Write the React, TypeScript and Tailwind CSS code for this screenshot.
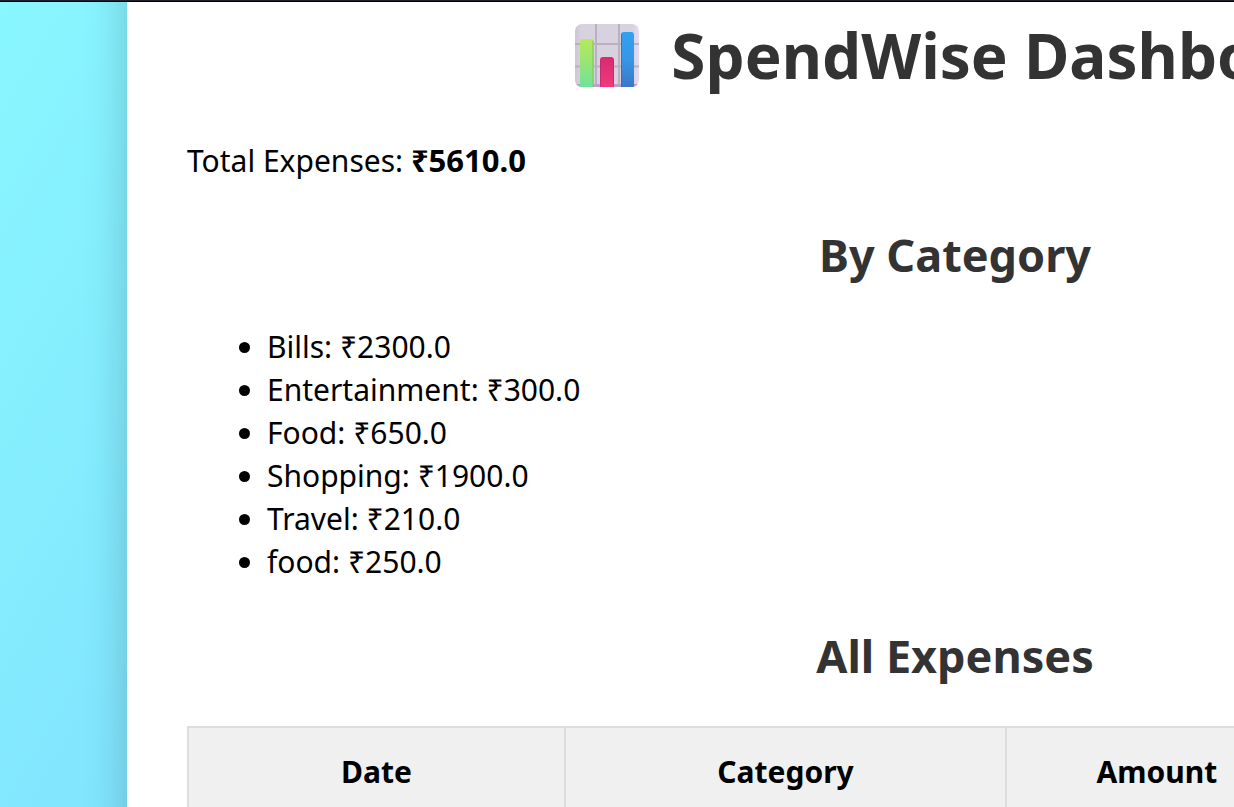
import React from 'react';

// Totals per category
const categories = [
    { name: 'Bills', total: '2300.0' },
    { name: 'Entertainment', total: '300.0' },
    { name: 'Food', total: '650.0' },
    { name: 'Shopping', total: '1900.0' },
    { name: 'Travel', total: '210.0' },
    { name: 'food', total: '250.0' }
];

const columns = [
    { label: 'Date', width: 'w-[377px]' },
    { label: 'Category', width: 'w-[441px]' },
    { label: 'Amount', width: 'w-[302px]' }
];

const ChartIcon = () => (
    <svg className="ml-6 mr-8 w-16 h-16 shrink-0" viewBox="0 0 64 64" aria-hidden="true">
        <defs>
            <linearGradient id="green" x1="0" y1="0" x2="0" y2="1">
                <stop offset="0" stopColor="#b4ea5c" />
                <stop offset="0.45" stopColor="#9be572" />
                <stop offset="1" stopColor="#6fe29b" />
            </linearGradient>
            <linearGradient id="pink" x1="0" y1="0" x2="0" y2="1">
                <stop offset="0" stopColor="#d92a70" />
                <stop offset="1" stopColor="#f03a7c" />
            </linearGradient>
            <linearGradient id="blue" x1="0" y1="0" x2="0" y2="1">
                <stop offset="0" stopColor="#33a0f2" />
                <stop offset="0.5" stopColor="#3797e6" />
                <stop offset="1" stopColor="#3a76c8" />
            </linearGradient>
            <linearGradient id="tile" x1="0" y1="0" x2="1" y2="0">
                <stop offset="0" stopColor="#cdc6d2" />
                <stop offset="0.1" stopColor="#d8d1df" />
                <stop offset="0.9" stopColor="#d9d1e1" />
                <stop offset="1" stopColor="#e6dced" />
            </linearGradient>
            <clipPath id="tileClip">
                <rect width="64" height="63" rx="7" />
            </clipPath>
        </defs>
        <g clipPath="url(#tileClip)">
            <rect width="64" height="63" fill="url(#tile)" />
            <path d="M21 0V63M44 0V63M0 20H64M0 42.5H64" stroke="#b9b2be" strokeWidth="2" />
            <rect x="0" y="60" width="64" height="3" fill="#b9a0cf" />
            <path d="M5 63V18a3 3 0 0 1 3-3h8a3 3 0 0 1 3 3V63Z" fill="url(#green)" />
            <path d="M17 15.5V63H19V18Z" fill="#8cc75f" fillOpacity="0.6" />
            <path d="M25 63V36a3 3 0 0 1 3-3h8a3 3 0 0 1 3 3V63Z" fill="url(#pink)" />
            <path d="M25 63V36H26V63ZM38 63V36H39V63Z" fill="#b72370" fillOpacity="0.6" />
            <path d="M46 63V11a3 3 0 0 1 3-3h7a3 3 0 0 1 3 3V63Z" fill="url(#blue)" />
            <path d="M46 63V11a3 3 0 0 1 1-2V63Z" fill="#2b66b5" fillOpacity="0.7" />
        </g>
    </svg>
);

export default function App() {
    return (
        <div className="flex h-screen flex-col overflow-hidden bg-white font-['Noto_Sans','Open_Sans',sans-serif] text-black">
            <div className="h-[2px] shrink-0 border-b border-black bg-[#1f1f2b]" />

            <div className="flex-1 overflow-hidden bg-[linear-gradient(120deg,#89f7fe,#66a6ff_2200px)] pl-[127px]">
                <main className="-mt-16 w-[1656px] bg-white px-[60px] pt-[75px] pb-16 shadow-[0_0_40px_rgba(0,0,0,0.2)]">
                    <h1 className="mb-[41px] flex h-[85px] items-center justify-center whitespace-nowrap text-[62px] leading-[85px] font-bold text-[#333]">
                        <ChartIcon />
                        SpendWise Dashboard
                    </h1>

                    <p className="text-[30px] leading-[43px]">
                        Total Expenses: <strong className="text-[31px]">₹5610.0</strong>
                    </p>

                    <h2 className="mt-[41px] mb-[38px] text-center text-[45px] leading-[64px] font-bold text-[#333]">By Category</h2>

                    <ul className="list-disc pl-20 text-[30px] leading-[43px]">
                        {categories.map((category) => (
                            <li key={category.name}>
                                {category.name}: ₹{category.total}
                            </li>
                        ))}
                    </ul>

                    <h2 className="mt-[41px] mb-[38px] text-center text-[45px] leading-[64px] font-bold text-[#333]">All Expenses</h2>

                    <table className="w-[1120px] table-fixed border-collapse text-[30px] leading-[43px]">
                        <thead>
                            <tr>
                                {columns.map((column) => (
                                    <th
                                        key={column.label}
                                        scope="col"
                                        className={`${column.width} border-2 border-[#ddd] bg-[#f0f0f0] px-6 py-[22px] text-center font-bold`}
                                    >
                                        {column.label}
                                    </th>
                                ))}
                            </tr>
                        </thead>
                    </table>
                </main>
            </div>
        </div>
    );
}
